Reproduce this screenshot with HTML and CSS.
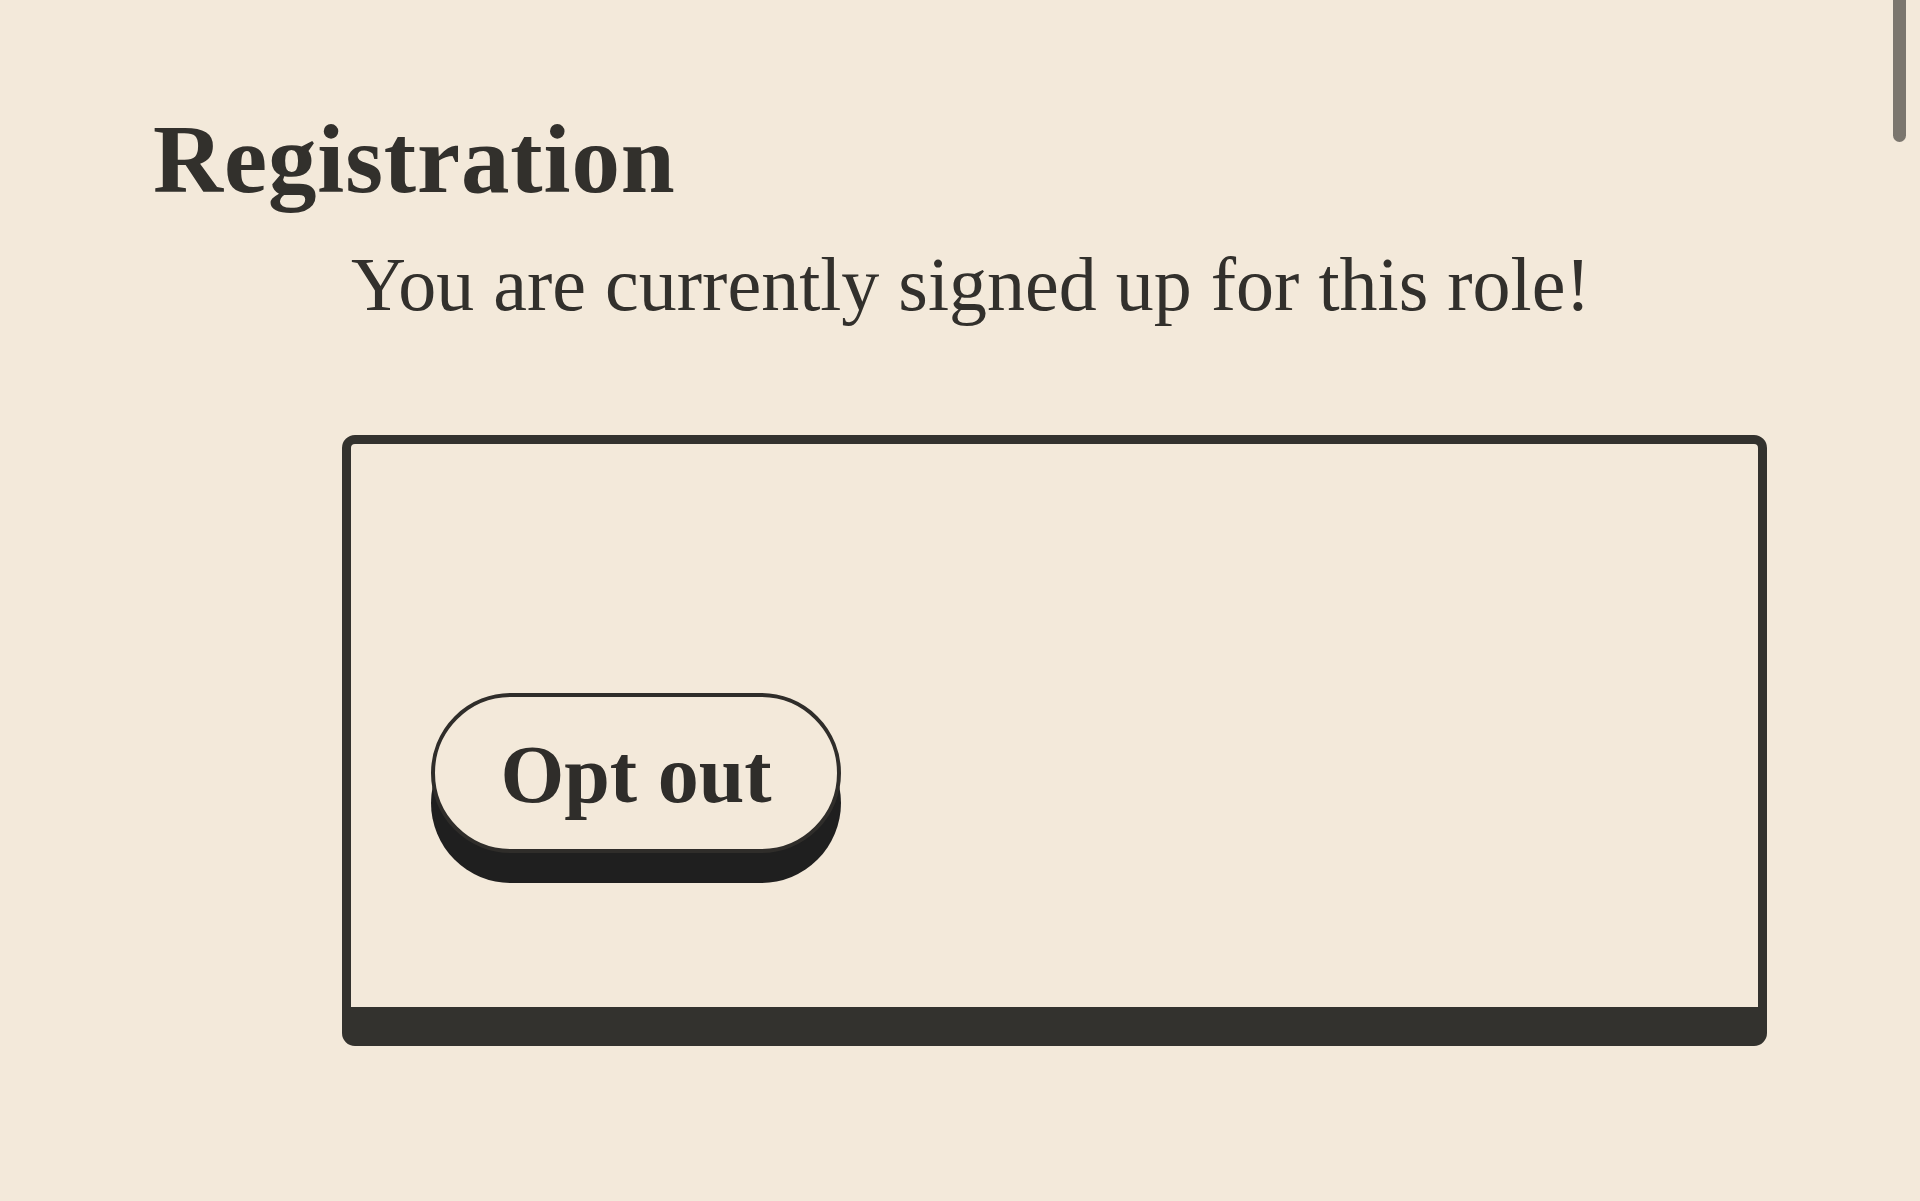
FILE: index.html
```html
<!DOCTYPE html>
<html lang="en">
<head>
    <meta charset="UTF-8">
    <title>Registration</title>
    <link rel="stylesheet" href="styles.css">
</head>
<body>
    <div class="page">
        <h1 class="title">Registration</h1>
        <div class="content">
            <p class="status">You are currently signed up for this role!</p>
            <div class="card">
                <button class="opt-btn">Opt out</button>
            </div>
        </div>
    </div>
    <div class="scroll-thumb"></div>
</body>
</html>
```

FILE: styles.css
```css
body {
    margin: 0;
    background: #f3e9da;
    color: #32302c;
    font-family: "Liberation Serif", "DejaVu Serif", serif;
}

.page {
    padding: 111px 0 80px 0;
}

.title {
    margin: 0 0 0 153px;
    font-size: 97px;
    line-height: 1;
    font-weight: 700;
    letter-spacing: 0.9px;
}

.content {
    margin-left: 342px;
    width: 1425px;
}

.status {
    margin: 38px 0 113px 0;
    padding-left: 9px;
    font-size: 76px;
    line-height: 1;
    font-weight: 400;
}

.card {
    box-sizing: border-box;
    height: 611px;
    padding: 249px 80px 0 80px;
    border: 9px solid #33322e;
    border-bottom-width: 39px;
    border-radius: 13px;
}

.opt-btn {
    display: flex;
    align-items: center;
    justify-content: center;
    box-sizing: border-box;
    width: 410px;
    height: 160px;
    padding: 4px 0 0 0;
    border: 4px solid #2f2d2a;
    border-radius: 80px;
    background: #f3e9da;
    box-shadow: 0 30px 0 #1f1f1f;
    color: #2f2d2a;
    font-family: "Liberation Serif", "DejaVu Serif", serif;
    font-size: 82px;
    font-weight: 700;
    cursor: pointer;
}

.scroll-thumb {
    position: fixed;
    top: 0;
    right: 14px;
    width: 13px;
    height: 142px;
    border-radius: 0 0 7px 7px;
    background: #7b766e;
}
```
